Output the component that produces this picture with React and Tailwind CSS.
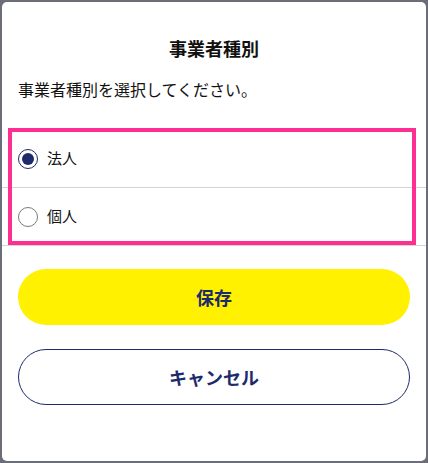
import { useState } from "react";

const options = [
  { id: "corp", label: "法人" },
  { id: "indiv", label: "個人" },
];

const Radio = ({ checked }) => (
  <span
    className={`flex h-5 w-5 shrink-0 items-center justify-center rounded-full border-[1.5px] ${
      checked ? "border-[#1d2a6b]" : "border-[#7a7a7a]"
    }`}
  >
    {checked && <span className="h-3 w-3 rounded-full bg-[#1d2a6b]" />}
  </span>
);

export default function App() {
  const [selected, setSelected] = useState("corp");

  return (
    <div
      className="h-[463px] w-[428px] bg-[#6b6e78] p-[2px]"
      style={{ fontFamily: '"Noto Sans CJK JP", "Noto Sans", sans-serif' }}
    >
      <div className="flex h-full flex-col rounded-[5px] bg-white">
        {/* TITLE */}
        <h1 className="pt-[33px] text-center text-[18px] font-bold leading-[27px] text-[#111]">
          事業者種別
        </h1>
        <p className="mt-[15px] px-4 text-[16px] leading-[24px] text-[#111]">
          事業者種別を選択してください。
        </p>

        {/* OPTIONS */}
        <div className="relative mt-[29px]">
          {options.map((opt) => (
            <label
              key={opt.id}
              onClick={() => setSelected(opt.id)}
              className="flex h-[58px] cursor-pointer items-center gap-[9px] border-b border-[#d4d4d4] px-4"
            >
              <Radio checked={selected === opt.id} />
              <span className="text-[15px] text-[#111]">{opt.label}</span>
            </label>
          ))}
          {/* highlight outline */}
          <div className="pointer-events-none absolute -top-[2px] left-[6px] h-[117px] w-[408px] border-4 border-[#fd2f93]" />
        </div>

        {/* ACTIONS */}
        <div className="mt-[23px] flex flex-col gap-6 px-4">
          <button className="h-14 w-full rounded-full bg-[#fff100] text-[18px] font-bold text-[#1d2a6b]">
            保存
          </button>
          <button className="h-14 w-full rounded-full border border-[#1d2a6b] bg-white text-[18px] font-bold text-[#1d2a6b]">
            キャンセル
          </button>
        </div>
      </div>
    </div>
  );
}
